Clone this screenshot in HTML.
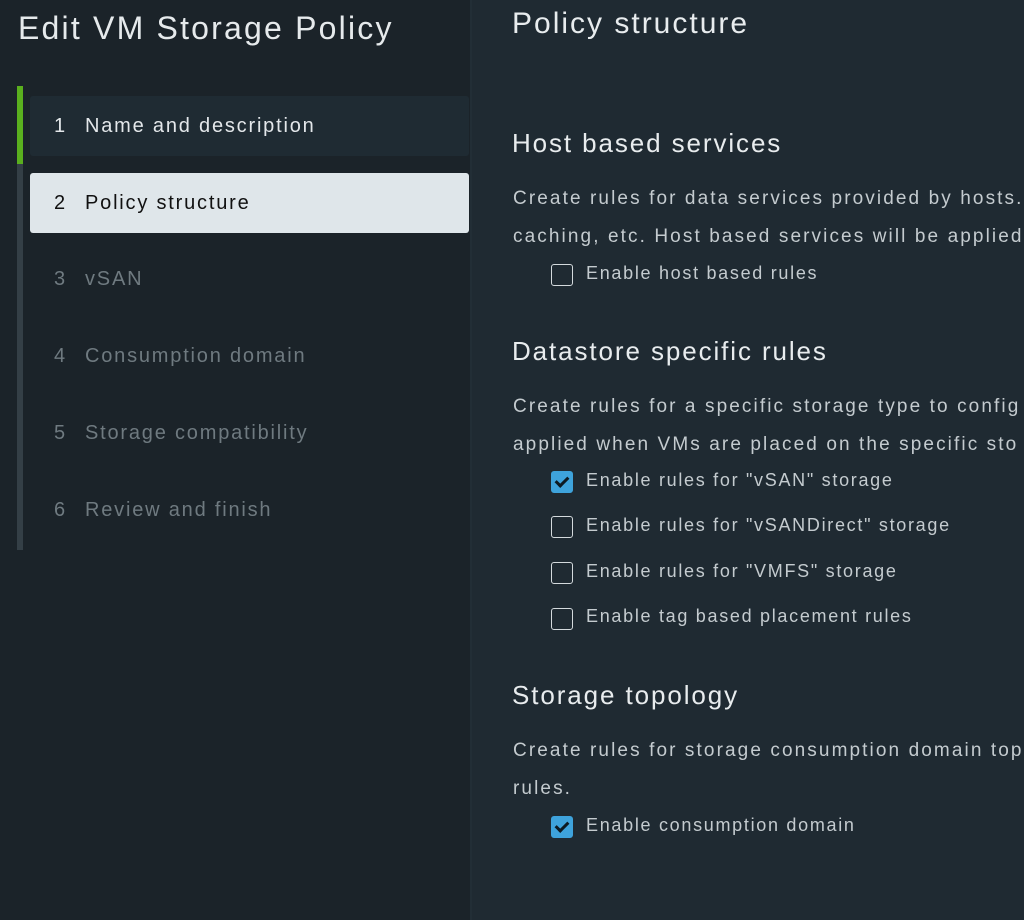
<!DOCTYPE html><html><head><style>
body{margin:0;width:1024px;height:920px;overflow:hidden;background:#1f2a32;font-family:"Liberation Sans",sans-serif;position:relative}
.l{position:absolute;left:0;top:0;width:470px;height:920px;background:#1b2329;border-right:2px solid #222e36}
.t{position:absolute;white-space:nowrap}
.bar{position:absolute;left:17px;width:6px}
.it{position:absolute;left:30px;width:439px;height:60px;font-size:20px;line-height:60px;color:#6f7a80;box-sizing:border-box;padding-left:24px;border-radius:3px;letter-spacing:1.8px;white-space:nowrap}
.it span{display:inline-block;width:31px;letter-spacing:0}
.h{font-size:26px;color:#e8ecee;letter-spacing:1.9px}
.p{font-size:19px;color:#c4cbcf;letter-spacing:2.1px}
.cb{position:absolute;left:551px;width:22px;height:22px;border:1.5px solid #d4dadd;border-radius:3px;box-sizing:border-box}
.ck{background:#3ea3dc;border-color:#3ea3dc}
.ck:after{content:"";position:absolute;left:6px;top:2px;width:5px;height:10px;border:solid #0d1a22;border-width:0 3px 3px 0;transform:rotate(45deg)}
.c{left:586px;font-size:18px;color:#c4cbcf;letter-spacing:1.7px}
</style></head><body>
<div class="l"></div>
<div class="t" style="left:18px;top:10px;font-size:32px;color:#e6eaec;letter-spacing:2.2px">Edit VM Storage Policy</div>
<div class="bar" style="top:86px;height:78px;background:#5aaf1e"></div>
<div class="bar" style="top:164px;height:386px;background:#343f46"></div>
<div class="it" style="top:96px;background:#1f2b33;color:#e3e7ea"><span>1</span>Name and description</div>
<div class="it" style="top:173px;background:#dfe6ea;color:#111"><span>2</span>Policy structure</div>
<div class="it" style="top:249px"><span>3</span>vSAN</div>
<div class="it" style="top:326px"><span>4</span>Consumption domain</div>
<div class="it" style="top:403px"><span>5</span>Storage compatibility</div>
<div class="it" style="top:480px"><span>6</span>Review and finish</div>
<div class="t h" style="left:512px;top:7px;font-size:30px;letter-spacing:2px">Policy structure</div>
<div class="t h" style="left:512px;top:128px">Host based services</div>
<div class="t p" style="left:513px;top:188px">Create rules for data services provided by hosts.</div>
<div class="t p" style="left:513px;top:226px">caching, etc. Host based services will be applied</div>
<div class="cb" style="top:264px"></div><div class="t c" style="top:263px">Enable host based rules</div>
<div class="t h" style="left:512px;top:336px">Datastore specific rules</div>
<div class="t p" style="left:513px;top:396px">Create rules for a specific storage type to config</div>
<div class="t p" style="left:513px;top:434px">applied when VMs are placed on the specific sto</div>
<div class="cb ck" style="top:471px"></div><div class="t c" style="top:470px">Enable rules for "vSAN" storage</div>
<div class="cb" style="top:516px"></div><div class="t c" style="top:515px">Enable rules for "vSANDirect" storage</div>
<div class="cb" style="top:562px"></div><div class="t c" style="top:561px">Enable rules for "VMFS" storage</div>
<div class="cb" style="top:608px"></div><div class="t c" style="top:606px">Enable tag based placement rules</div>
<div class="t h" style="left:512px;top:680px">Storage topology</div>
<div class="t p" style="left:513px;top:740px">Create rules for storage consumption domain top</div>
<div class="t p" style="left:513px;top:778px">rules.</div>
<div class="cb ck" style="top:816px"></div><div class="t c" style="top:815px">Enable consumption domain</div>
</body></html>
